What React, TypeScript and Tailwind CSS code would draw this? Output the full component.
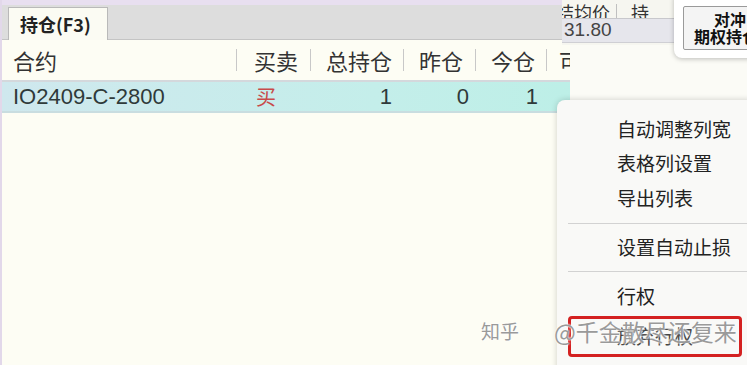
import React from "react";

const font = { fontFamily: '"Noto Sans CJK SC", "Noto Sans", sans-serif' };
const latin = { fontFamily: '"Liberation Sans", Arial, "Noto Sans CJK SC", sans-serif' };

function Sep() {
  return <div className="w-px h-[22px] bg-[#c8c8c8]" />;
}

export default function App() {
  return (
    <div
      className="relative w-[747px] h-[365px] overflow-hidden bg-[#fdfdf4] text-[#2a2a2a]"
      style={font}
    >
      <div className="flex flex-col h-full border-l-2 border-[#e2d8ea]">
        <div className="h-[5px] bg-[#e8dff0]" />
        {/* tab bar */}
        <div className="h-[35px] bg-[#dddddd] flex items-end pl-[6px] border-b border-[#c4c4c4]">
          <div className="h-[33px] w-[100px] bg-[#fbfbf3] border border-b-0 border-[#b9b9b9] flex items-center pl-[11px] text-[18px] font-bold text-[#222] -mb-px">
            持仓(F3)
          </div>
        </div>
        {/* header row */}
        <div className="h-[42px] flex items-center text-[22px] text-[#333] border-b-2 border-[#d4d8dc]">
          <div className="w-[235px] pl-[11px] flex items-center justify-between">
            <span>合约</span>
            <Sep />
          </div>
          <div className="w-[74px] pl-[17px] flex items-center justify-between">
            <span>买卖</span>
            <Sep />
          </div>
          <div className="w-[93px] pl-[15px] flex items-center justify-between">
            <span>总持仓</span>
            <Sep />
          </div>
          <div className="w-[72px] pl-[15px] flex items-center justify-between">
            <span>昨仓</span>
            <Sep />
          </div>
          <div className="w-[71px] pl-[15px] flex items-center justify-between">
            <span>今仓</span>
            <Sep />
          </div>
          <div className="pl-[12px]">可</div>
        </div>
        {/* data row */}
        <div className="h-[31px] flex items-center text-[22px] text-[#2f3a3a] bg-gradient-to-r from-[#cfe8ee] via-[#c4eeea] to-[#b6f0e4] border-b-2 border-[#c9dde0]">
          <div className="w-[235px] pl-[11px]" style={latin}>
            IO2409-C-2800
          </div>
          <div className="w-[74px] pl-[19px] text-[#c84a4a] text-[20px]">买</div>
          <div className="w-[93px] pr-[12px] text-right" style={latin}>1</div>
          <div className="w-[72px] pr-[7px] text-right" style={latin}>0</div>
          <div className="w-[71px] pr-[9px] text-right" style={latin}>1</div>
        </div>
        <div className="flex-1" />
      </div>

      {/* area of right window below its rows */}
      <div className="absolute left-[570px] top-[45px] w-[180px] h-[60px] bg-[#fbfbf6]" />

      {/* right top background window */}
      <div className="absolute left-[562px] top-0 w-[120px] h-[45px] flex flex-col bg-[#f6f6f0]">
        <div className="h-[19px] overflow-hidden border-b border-[#c8c8cc] flex items-end">
          <span className="text-[18px] leading-none text-[#333] -mb-[3px] ml-[-6px]">结均价</span>
          <span className="w-px h-[14px] bg-[#c0c0c0] ml-[6px]" />
          <span className="text-[18px] leading-none text-[#333] -mb-[3px] ml-[14px]">持</span>
        </div>
        <div className="h-[24px] bg-[#e6e6ec] flex items-center pl-[2px] text-[19px] text-[#444] border-b border-[#cfcfd4]" style={latin}>
          31.80
        </div>
      </div>
      <div className="absolute left-[674px] top-[-8px] w-[90px] h-[66px] rounded-[8px] bg-white shadow-[0_1px_5px_rgba(0,0,0,0.25)] flex items-center pl-[9px] overflow-hidden">
        <div className="mt-[5px] w-[80px] h-[44px] shrink-0 border border-[#9a9a9a] rounded-[2px] bg-[#f4f4f4] flex flex-col items-start justify-center text-[16px] leading-[17px] font-bold text-[#111] whitespace-nowrap">
          <span className="pl-[30px]">对冲</span>
          <span className="pl-[10px]">期权持仓</span>
        </div>
      </div>

      {/* context menu */}
      <div className="absolute left-[557px] top-[100px] w-[200px] h-[280px] rounded-[8px] bg-[#f9f9f7] shadow-[0_0_6px_rgba(0,0,0,0.18)] flex flex-col text-[19px] text-[#222]">
        <div className="h-[12px]" />
        <div className="h-[34px] flex items-center pl-[60px]">自动调整列宽</div>
        <div className="h-[35px] flex items-center pl-[60px]">表格列设置</div>
        <div className="h-[35px] flex items-center pl-[60px]">导出列表</div>
        <div className="h-[15px] flex items-center pl-[11px]">
          <div className="h-px w-full bg-[#d2d2d2]" />
        </div>
        <div className="h-[33px] flex items-center pl-[60px]">设置自动止损</div>
        <div className="h-[15px] flex items-center pl-[11px]">
          <div className="h-px w-full bg-[#d2d2d2]" />
        </div>
        <div className="h-[34px] flex items-center pl-[60px]">行权</div>
        <div className="ml-[11px] mt-[3px] w-[174px] h-[41px] rounded-[4px] border-[3px] border-[#d42121] flex items-center pl-[46px] text-[#444]">
          放弃行权
        </div>
      </div>

      {/* watermark */}
      <div
        className="absolute left-[481px] top-[314px] flex items-center text-[#9a9a9a] whitespace-nowrap"
        style={{ textShadow: "0 0 2px #fff, 0 0 2px #fff" }}
      >
        <span className="text-[19px]">知乎</span>
        <span className="ml-[35px] text-[23px]">@千金散尽还复来</span>
      </div>
    </div>
  );
}
